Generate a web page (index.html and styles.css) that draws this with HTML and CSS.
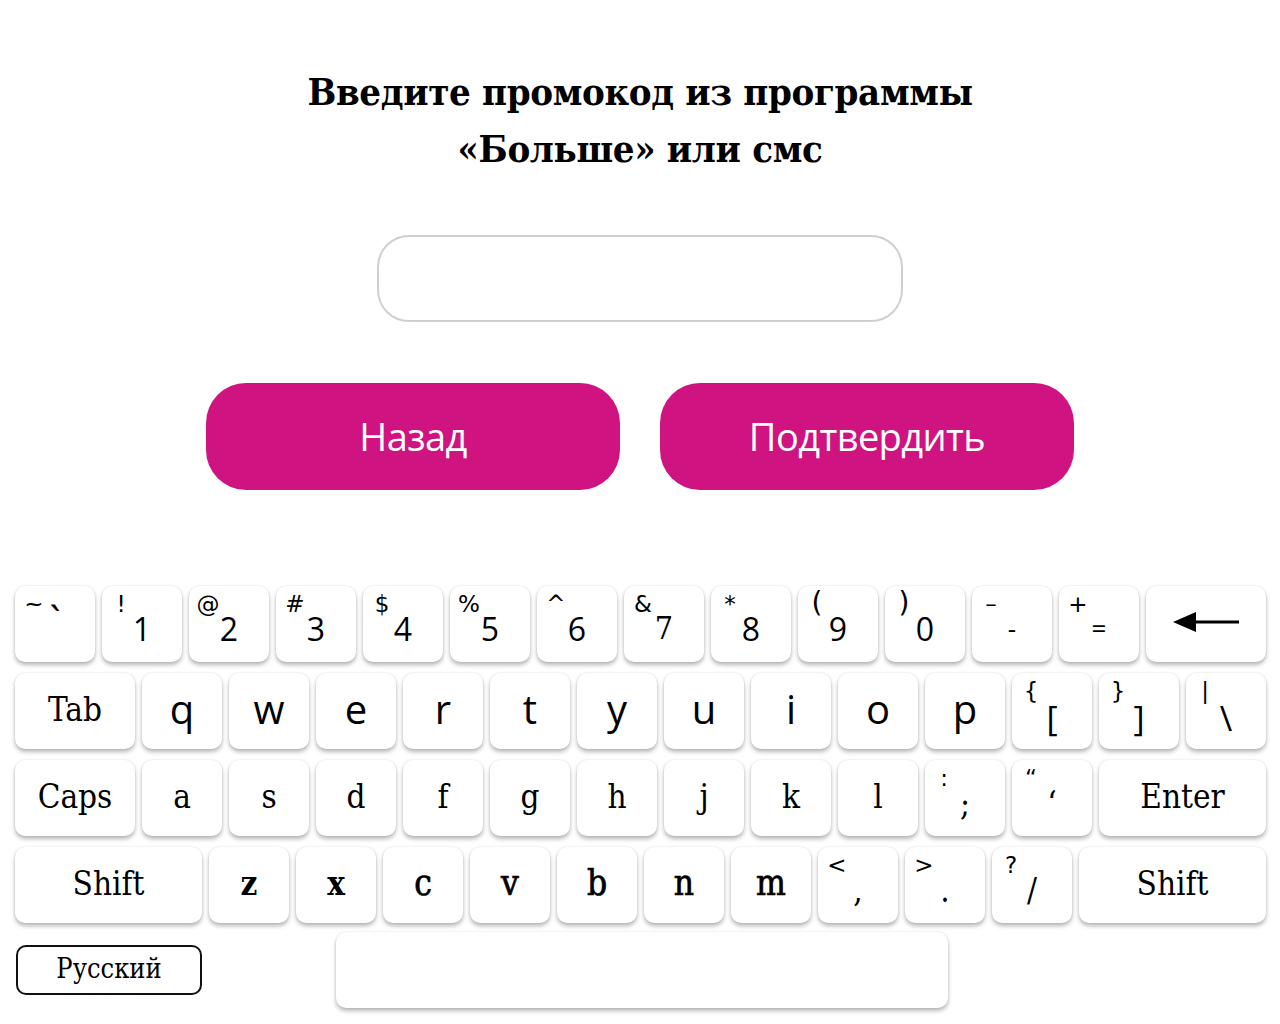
FILE: index.html
```html
<!DOCTYPE html>
<html lang="ru">
<head>
<meta charset="utf-8">
<title>Промокод</title>
<link rel="stylesheet" href="styles.css">
</head>
<body>
<main class="page">
  <h1 class="title">Введите промокод из программы<br>«Больше» или смс</h1>
  <div class="field"></div>
  <div class="actions">
    <button class="btn">Назад</button>
    <button class="btn">Подтвердить</button>
  </div>

  <div class="keyboard">
    <div class="row">
      <div class="key dual"><span class="sym">~</span><span class="main sans tick">`</span></div>
      <div class="key dual"><span class="sym">!</span><span class="main num">1</span></div>
      <div class="key dual"><span class="sym">@</span><span class="main num">2</span></div>
      <div class="key dual"><span class="sym">#</span><span class="main num">3</span></div>
      <div class="key dual"><span class="sym">$</span><span class="main num">4</span></div>
      <div class="key dual"><span class="sym">%</span><span class="main num">5</span></div>
      <div class="key dual"><span class="sym">^</span><span class="main num">6</span></div>
      <div class="key dual"><span class="sym">&amp;</span><span class="main num slabnum">7</span></div>
      <div class="key dual"><span class="sym">*</span><span class="main num">8</span></div>
      <div class="key dual"><span class="sym sym-big">(</span><span class="main num">9</span></div>
      <div class="key dual"><span class="sym sym-big">)</span><span class="main num">0</span></div>
      <div class="key dual"><span class="sym">–</span><span class="main num small">-</span></div>
      <div class="key dual"><span class="sym">+</span><span class="main num small">=</span></div>
      <div class="key w120">
        <svg class="arrow" width="66" height="22" viewBox="0 0 66 22"><polygon points="0,11 23,1 23,21" fill="#000"/><rect x="18" y="9.5" width="48" height="3" fill="#000"/></svg>
      </div>
    </div>
    <div class="row">
      <div class="key w120 slab">Tab</div>
      <div class="key sans">q</div>
      <div class="key sans">w</div>
      <div class="key sans">e</div>
      <div class="key sans">r</div>
      <div class="key sans">t</div>
      <div class="key sans">y</div>
      <div class="key sans">u</div>
      <div class="key sans">i</div>
      <div class="key sans">o</div>
      <div class="key sans">p</div>
      <div class="key dual"><span class="sym">{</span><span class="main sans br">[</span></div>
      <div class="key dual"><span class="sym">}</span><span class="main sans br">]</span></div>
      <div class="key dual"><span class="sym">|</span><span class="main sans br">\</span></div>
    </div>
    <div class="row">
      <div class="key w120 slab">Caps</div>
      <div class="key slab">a</div>
      <div class="key slab">s</div>
      <div class="key slab">d</div>
      <div class="key slab">f</div>
      <div class="key slab">g</div>
      <div class="key slab">h</div>
      <div class="key slab">j</div>
      <div class="key slab">k</div>
      <div class="key slab">l</div>
      <div class="key dual"><span class="sym">:</span><span class="main slab">;</span></div>
      <div class="key dual"><span class="sym">“</span><span class="main slab">‘</span></div>
      <div class="key grow slab">Enter</div>
    </div>
    <div class="row">
      <div class="key w187 slab">Shift</div>
      <div class="key slab bold">z</div>
      <div class="key slab bold">x</div>
      <div class="key slab medium">c</div>
      <div class="key slab medium">v</div>
      <div class="key slab medium">b</div>
      <div class="key slab medium">n</div>
      <div class="key slab medium">m</div>
      <div class="key dual"><span class="sym">&lt;</span><span class="main slab">,</span></div>
      <div class="key dual"><span class="sym">&gt;</span><span class="main slab">.</span></div>
      <div class="key dual"><span class="sym">?</span><span class="main slab">/</span></div>
      <div class="key grow slab">Shift</div>
    </div>
    <div class="row last">
      <button class="lang">Русский</button>
      <div class="key space"></div>
    </div>
  </div>
</main>
</body>
</html>
```
FILE: styles.css
```css
html, body {
  margin: 0;
  padding: 0;
  background: #fff;
}
body {
  font-family: "Open Sans", "Noto Sans", sans-serif;
  color: #000;
  width: 1280px;
  height: 1024px;
  overflow: hidden;
}
.page {
  display: flex;
  flex-direction: column;
  align-items: center;
  padding-top: 63px;
}
.title {
  margin: 0;
  font-family: "DejaVu Serif", serif;
  font-weight: bold;
  font-stretch: condensed;
  font-size: 38px;
  line-height: 57px;
  text-align: center;
  letter-spacing: -0.35px;
}
.field {
  margin-top: 58px;
  width: 522px;
  height: 83px;
  border: 2px solid #cfcfcf;
  border-radius: 32px;
}
.actions {
  margin-top: 61px;
  display: flex;
  gap: 40px;
}
.btn {
  width: 414px;
  height: 107px;
  border: none;
  border-radius: 40px;
  background: #cf1380;
  color: #fff;
  font-family: "Open Sans", "Noto Sans", sans-serif;
  font-size: 38px;
  font-weight: 400;
  letter-spacing: -0.6px;
  padding: 0;
  padding-bottom: 2px;
}
.keyboard {
  align-self: stretch;
  margin-top: 96px;
  padding-left: 15px;
  width: 1251px;
}
.row {
  display: flex;
  gap: 7px;
  height: 76px;
  margin-bottom: 11px;
}
.key {
  position: relative;
  width: 80px;
  height: 76px;
  flex: none;
  background: #fff;
  border-radius: 10px;
  box-shadow: 0 3px 4px rgba(0,0,0,0.28), 0 0 2px rgba(0,0,0,0.12);
  display: flex;
  align-items: center;
  justify-content: center;
  box-sizing: border-box;
}
.w120 { width: 120px; }
.w187 { width: 187px; }
.grow { flex: 1; }
.sans {
  font-family: "Open Sans", sans-serif;
  font-size: 40px;
  padding-bottom: 6px;
}
.slab {
  font-family: "DejaVu Serif", serif;
  font-stretch: condensed;
  font-size: 33px;
  padding-bottom: 4px;
}
.bold { font-weight: bold; font-size: 33px; }
.medium { font-size: 35px; -webkit-text-stroke: 0.7px #000; }
.dual .sym {
  position: absolute;
  left: 19px;
  top: 7px;
  transform: translateX(-50%);
  font-family: "DejaVu Sans", sans-serif;
  font-size: 23px;
  line-height: 1;
}
.dual .sym-big { font-size: 28px; top: 3px; }
.dual .main {
  margin-top: 10px;
  padding-bottom: 0;
}
.tick { margin-top: 0 !important; padding-bottom: 10px !important; }
.num {
  font-family: "Open Sans", sans-serif;
  font-size: 32px;
  margin-top: 8px !important;
}
.slabnum { font-family: "DejaVu Serif", serif; font-stretch: condensed; }
.small { font-size: 26px; }
.br { font-size: 34px; margin-top: 14px !important; }
.arrow { display: block; margin-bottom: 4px; }
.row.last {
  align-items: flex-start;
  gap: 0;
  margin-bottom: 0;
}
.lang {
  margin-top: 11px;
  margin-left: 1px;
  width: 186px;
  height: 50px;
  border: 2px solid #111;
  border-radius: 10px;
  background: #fff;
  font-family: "DejaVu Serif", serif;
  font-stretch: condensed;
  font-size: 27px;
  color: #000;
  padding: 0 0 3px;
}
.space {
  margin-left: 134px;
  margin-top: -2px;
  width: 612px;
  height: 76px;
}
```
